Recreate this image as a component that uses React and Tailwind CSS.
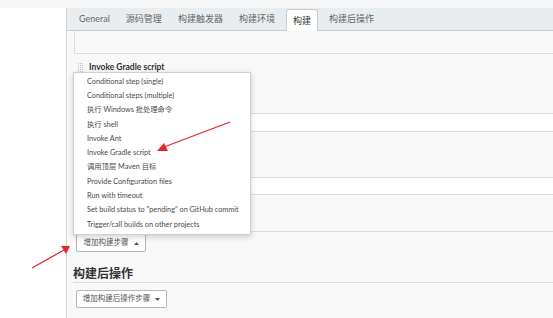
import React from "react";

const tabs = ["General", "源码管理", "构建触发器", "构建环境", "构建", "构建后操作"];

const menuItems = [
  "Conditional step (single)",
  "Conditional steps (multiple)",
  "执行 Windows 批处理命令",
  "执行 shell",
  "Invoke Ant",
  "Invoke Gradle script",
  "调用顶层 Maven 目标",
  "Provide Configuration files",
  "Run with timeout",
  'Set build status to "pending" on GitHub commit',
  "Trigger/call builds on other projects",
];

function DragHandle() {
  return (
    <svg width="6" height="9" viewBox="0 0 6 9" className="shrink-0">
      {[0, 2, 4, 6, 8].map((y) =>
        [0, 2, 4].map((x) => <rect key={`${x}-${y}`} x={x} y={y} width="1" height="1" fill="#c4c4c4" />)
      )}
    </svg>
  );
}

function Caret({ up }) {
  return (
    <svg width="5" height="3" viewBox="0 0 5 3" className="shrink-0">
      <polygon points={up ? "0,3 5,3 2.5,0" : "0,0 5,0 2.5,3"} fill="#555" />
    </svg>
  );
}

function Arrows() {
  return (
    <svg className="absolute inset-0 pointer-events-none" width="553" height="318" viewBox="0 0 553 318">
      {/* arrow to Invoke Gradle script */}
      <line x1="230" y1="122" x2="164" y2="147" stroke="#e3262b" strokeWidth="1.3" />
      <polygon points="157,151 164,143 168,151" fill="#e3262b" />
      {/* arrow to add step button */}
      <line x1="32" y1="268" x2="64" y2="250" stroke="#e3262b" strokeWidth="1.3" />
      <polygon points="70,246 61,246 66,254" fill="#e3262b" />
    </svg>
  );
}

export default function App() {
  return (
    <div
      className="relative w-[553px] h-[318px] overflow-hidden bg-white text-[#333]"
      style={{ fontFamily: '"Lato", "Noto Sans CJK SC", sans-serif' }}
    >
      <div className="h-[8px] bg-[#f6f6f6]" />
      <div className="flex h-[310px]">
        <div className="w-[66px] bg-white" />
        <div className="flex-1 flex flex-col border-l border-[#d6d6d6] bg-[#f8f8f8]">
          {/* Tab bar */}
          <div className="h-[23px] flex items-end pl-[4px] bg-[#e9edf0] border-b border-[#c6ccd1] text-[9px] text-[#666]">
            {tabs.map((t) =>
              t === "构建" ? (
                <div
                  key={t}
                  className="relative -mb-px mx-[3px] h-[22px] px-[6px] flex items-center bg-white border border-b-0 border-[#c6ccd1] rounded-t-[3px] text-[#333]"
                >
                  {t}
                </div>
              ) : (
                <div key={t} className="h-[22px] px-[8px] flex items-center">
                  {t}
                </div>
              )
            )}
          </div>

          {/* Build steps */}
          <div className="pl-[7px]">
            <div className="h-[23px] border-l border-b border-[#dedede]" />
            <div className="border-b border-[#dedede] pb-[36px]">
              <div className="h-[14px] mt-[6px] pl-[4px] flex items-center gap-[5px]">
                <DragHandle />
                <span className="text-[8.5px] font-bold text-[#333]">Invoke Gradle script</span>
              </div>
              <div className="mt-[39px] ml-[16px] h-[19px] bg-white border-y border-[#dcdcdc]" />
              <div className="mt-[45px] ml-[16px] h-[18px] bg-white border-y border-[#dcdcdc]" />
            </div>

            <button className="mt-[2px] ml-[2px] h-[18px] w-[70px] flex items-center justify-center gap-[5px] bg-white border border-[#b8b8b8] rounded-[2px] text-[7.5px] text-[#555]">
              <span>增加构建步骤</span>
              <Caret up />
            </button>

            <div className="mt-[14px] -ml-[1px] h-[17px] border-b border-[#dedede] flex items-end">
              <span className="text-[12px] font-bold leading-[16px] text-[#333]">构建后操作</span>
            </div>

            <button className="mt-[7px] ml-[2px] h-[18px] w-[91px] flex items-center justify-center gap-[5px] bg-white border border-[#b8b8b8] rounded-[2px] text-[7.5px] text-[#555]">
              <span>增加构建后操作步骤</span>
              <Caret />
            </button>
          </div>
        </div>
      </div>

      {/* Dropdown menu */}
      <div className="absolute left-[73px] top-[72px] w-[178px] py-[2px] bg-white border border-[#d0d0d0] shadow-[0_2px_6px_rgba(0,0,0,0.18)]">
        {menuItems.map((m) => (
          <div key={m} className="h-[14.3px] pl-[13px] flex items-center text-[7.3px] text-[#4a4a4a] whitespace-nowrap">
            {m}
          </div>
        ))}
      </div>

      <Arrows />
    </div>
  );
}
